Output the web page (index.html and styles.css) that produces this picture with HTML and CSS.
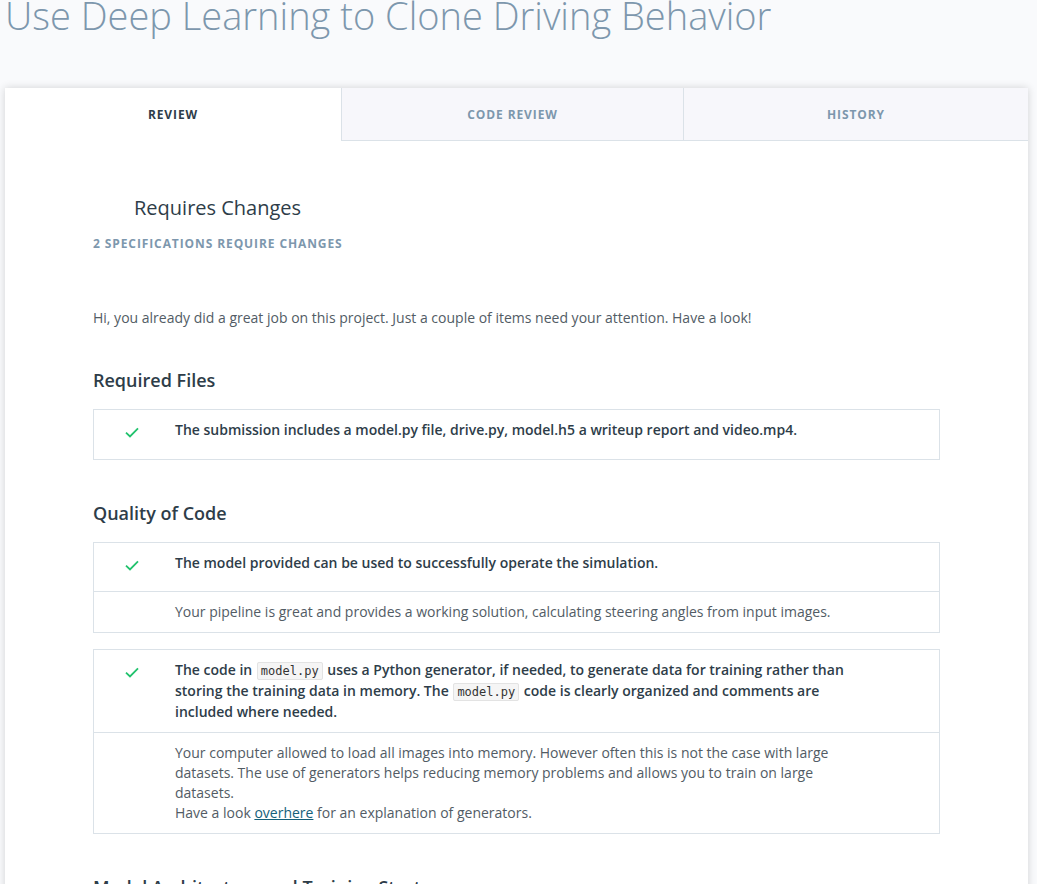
FILE: index.html
```html
<!DOCTYPE html>
<html lang="en">
<head>
<meta charset="utf-8">
<title>Review</title>
<link rel="stylesheet" href="styles.css">
</head>
<body>
<div class="page">
  <h1 class="project-title">Use Deep Learning to Clone Driving Behavior</h1>
  <div class="card">
    <nav class="tabs">
      <div class="tab active">REVIEW</div>
      <div class="tab">CODE REVIEW</div>
      <div class="tab">HISTORY</div>
    </nav>
    <div class="card-body">
      <div class="status">Requires Changes</div>
      <div class="status-sub">2 specifications require changes</div>
      <p class="intro">Hi, you already did a great job on this project. Just a couple of items need your attention. Have a look!</p>

      <h2 class="section-title">Required Files</h2>
      <div class="rubric">
        <div class="row criterion">
          <div class="mark"><svg class="check" viewBox="0 0 14 11" width="14" height="11"><path d="M1 5.6 L5 9.4 L13 1.4" fill="none" stroke="#21c26d" stroke-width="1.8"/></svg></div>
          <div class="text">The submission includes a model.py file, drive.py, model.h5 a writeup report and video.mp4.</div>
        </div>
      </div>

      <h2 class="section-title">Quality of Code</h2>
      <div class="rubric">
        <div class="row criterion">
          <div class="mark"><svg class="check" viewBox="0 0 14 11" width="14" height="11"><path d="M1 5.6 L5 9.4 L13 1.4" fill="none" stroke="#21c26d" stroke-width="1.8"/></svg></div>
          <div class="text">The model provided can be used to successfully operate the simulation.</div>
        </div>
        <div class="row comment">
          <div class="mark"></div>
          <div class="text">Your pipeline is great and provides a working solution, calculating steering angles from input images.</div>
        </div>
      </div>

      <div class="rubric spaced">
        <div class="row criterion">
          <div class="mark"><svg class="check" viewBox="0 0 14 11" width="14" height="11"><path d="M1 5.6 L5 9.4 L13 1.4" fill="none" stroke="#21c26d" stroke-width="1.8"/></svg></div>
          <div class="text">The code in <code>model.py</code> uses a Python generator, if needed, to generate data for training rather than storing the training data in memory. The <code>model.py</code> code is clearly organized and comments are included where needed.</div>
        </div>
        <div class="row comment">
          <div class="mark"></div>
          <div class="text">Your computer allowed to load all images into memory. However often this is not the case with large datasets. The use of generators helps reducing memory problems and allows you to train on large datasets.<br>Have a look <a href="#">overhere</a> for an explanation of generators.</div>
        </div>
      </div>

      <h2 class="section-title">Model Architecture and Training Strategy</h2>
    </div>
  </div>
</div>
</body>
</html>
```

FILE: styles.css
```css
html, body {
  margin: 0;
  padding: 0;
  background: #f9fafc;
  font-family: "Open Sans", "Liberation Sans", sans-serif;
  color: #2e3d49;
}

.page {
  padding: 0 9px 0 5px;
}

.project-title {
  margin: -12px 0 0 0;
  font-size: 38px;
  line-height: 54px;
  font-weight: 300;
  color: #7d97ad;
  white-space: nowrap;
}

.card {
  margin-top: 46px;
  background: #fff;
  box-shadow: 0 0 8px rgba(0, 0, 0, 0.16);
  min-height: 900px;
}

.tabs {
  display: grid;
  grid-template-columns: 336px 342px 1fr;
}

.tab {
  height: 52px;
  display: flex;
  align-items: center;
  justify-content: center;
  font-size: 12px;
  font-weight: 700;
  letter-spacing: 0.9px;
  color: #7d97ad;
  background: #f7f7fb;
  border-left: 1px solid #dbe2e8;
  border-bottom: 1px solid #dbe2e8;
}

.tab.active {
  background: #fff;
  color: #2e3d49;
  border-left: none;
  border-bottom: 1px solid transparent;
}

.card-body {
  padding: 53px 88px 0 88px;
}

.status {
  padding-left: 41px;
  font-size: 20px;
  line-height: 28px;
  color: #2e3d49;
}

.status-sub {
  margin-top: 14px;
  font-size: 12px;
  line-height: 16px;
  font-weight: 700;
  letter-spacing: 0.9px;
  text-transform: uppercase;
  color: #7d97ad;
}

.intro {
  margin: 56px 0 0 0;
  font-size: 14px;
  line-height: 20px;
  color: #525c65;
}

.section-title {
  margin: 40px 0 17px 0;
  font-size: 18px;
  line-height: 24px;
  font-weight: 600;
  color: #2e3d49;
}

.rubric {
  border: 1px solid #dbe2e8;
}

.rubric.spaced {
  margin-top: 16px;
}

.rubric + .section-title {
  margin-top: 41px;
}

.row {
  display: flex;
  padding: 10px 77px 10px 0;
}

.row + .row {
  border-top: 1px solid #dbe2e8;
}

.row.criterion {
  min-height: 28.5px;
}

.mark {
  flex: 0 0 81px;
  box-sizing: border-box;
  padding-left: 31px;
}

.check {
  display: block;
  margin-top: 7px;
}

.text {
  flex: 1;
  font-size: 14px;
  line-height: 20px;
}

.criterion .text {
  font-weight: 600;
  color: #2e3d49;
}

.comment .text {
  color: #525c65;
}

code {
  font-family: "DejaVu Sans Mono", "Liberation Mono", monospace;
  font-size: 12px;
  font-weight: 400;
  color: #333;
  background: #f5f5f5;
  border: 1px solid #e3e3e3;
  border-radius: 2px;
  padding: 1px 3px;
  margin: 0 1px;
}

a {
  color: #15607a;
  text-decoration: underline;
}
```
